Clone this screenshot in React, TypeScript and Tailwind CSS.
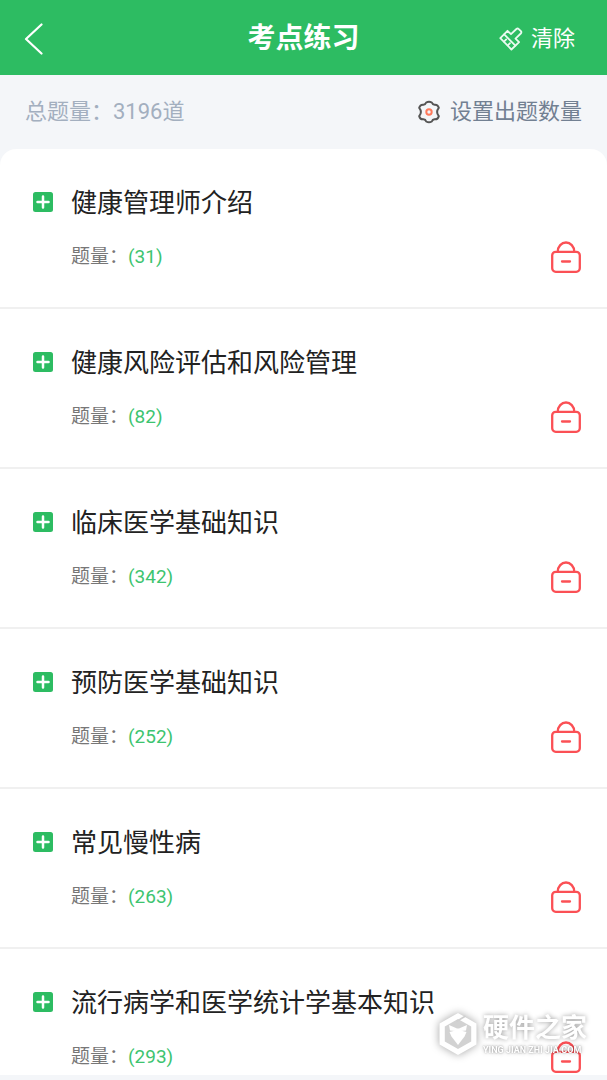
const chapters = [
  { id: 1, title: "健康管理师介绍", count: 31 },
  { id: 2, title: "健康风险评估和风险管理", count: 82 },
  { id: 3, title: "临床医学基础知识", count: 342 },
  { id: 4, title: "预防医学基础知识", count: 252 },
  { id: 5, title: "常见慢性病", count: 263 },
  { id: 6, title: "流行病学和医学统计学基本知识", count: 293 },
];

function BackIcon() {
  return (
    <svg width="20" height="32" viewBox="0 0 20 32" fill="none" stroke="#fff" strokeWidth="2.2" strokeLinecap="round" strokeLinejoin="round">
      <path d="M17.5 1.5 2 16l15.5 14.5" />
    </svg>
  );
}

function BroomIcon() {
  return (
    <svg width="24" height="24" viewBox="0 0 24 24" fill="none" stroke="#eafaf0" strokeWidth="1.8" strokeLinecap="round" strokeLinejoin="round">
      <path d="M8.500 3.800 12 7.200 17.400 2q1.200-1 2.400.1l2.100 2.100q1 1.200-.1 2.300l-5.300 5.100 3.600 3.500L12.400 22.500 1.300 11.200Z" />
      <path d="m5.200 7.400 11.200 11.200" />
      <path d="m5 14.600 2.200-2.200M8.800 18.400l2.200-2.200" />
    </svg>
  );
}

function GearIcon() {
  return (
    <svg width="22" height="24" viewBox="0 0 22 24" fill="none" strokeWidth="2" strokeLinejoin="round">
      <path
        stroke="#555"
        d="M8.200 2.500Q11 .8 13.800 2.500q.7 2 2.700 2.200 3.300-.4 4.300 3.100-1.700 2.100-1.700 4.200 0 2.100 1.700 4.200-1 3.500-4.300 3.100-2 .2-2.700 2.200-2.800 1.700-5.600 0-.7-2-2.700-2.200-3.300.4-4.300-3.100 1.700-2.100 1.700-4.200 0-2.100-1.700-4.200 1-3.500 4.300-3.100 2-.2 2.700-2.200Z"
      />
      <circle cx="11" cy="12" r="2.700" stroke="#ff7a5c" />
    </svg>
  );
}

function PlusIcon() {
  return (
    <svg width="20" height="20" viewBox="0 0 20 20">
      <rect width="20" height="20" rx="2.500" fill="#2dbc62" />
      <path d="M10 4.500v11M4.500 10h11" stroke="#fff" strokeWidth="2.500" strokeLinecap="round" />
    </svg>
  );
}

function LockIcon() {
  return (
    <svg width="30" height="32" viewBox="0 0 30 32" fill="none" stroke="#fb5055" strokeWidth="2.300" strokeLinecap="round">
      <rect x="1.200" y="10.800" width="27.600" height="20" rx="3.500" />
      <path d="M6.800 10.500a8.200 9 0 0 1 16.400 0M11 20.500h8" />
    </svg>
  );
}

function Watermark() {
  return (
    <div className="pointer-events-none absolute right-5 bottom-6 flex items-center gap-1.5 text-white">
      <svg className="overflow-visible drop-shadow-[0_0_4px_rgba(0,0,0,0.35)]" width="38" height="44" viewBox="0 0 38 44">
        <path d="M19 1 37.500 11.500v21L19 43 .5 32.500v-21Z" fill="#d2d2d2" />
        <path fillRule="evenodd" fill="#fff" d="M19 1 37.500 11.500v21L19 43 .5 32.500v-21ZM19 7 5.800 14.500v15L19 37l13.200-7.500v-15Z" />
        <path d="m26.500 4-9 5.500" stroke="#cfcfcf" strokeWidth="1.500" />
        <path d="m10 13 8 3.500h2l8-3.500-1 5.500-5 .5h-6l-5-.5Z" fill="#fff" />
        <path d="m10.500 20 4-1h9l4 1-2 4.500L19 33l-6.500-8.500Z" fill="#fff" />
      </svg>
      <div>
        <div className="text-[26px] leading-8 font-bold [text-shadow:0_0_5px_rgba(0,0,0,0.4)]">硬件之家</div>
        <div className="text-[9px] leading-3 font-bold whitespace-nowrap [text-shadow:0_0_2px_rgba(0,0,0,0.35),0_0_4px_rgba(0,0,0,0.35)]">YING JIAN ZHI JIA.COM</div>
      </div>
    </div>
  );
}

export default function App() {
  return (
    <div className="relative flex h-screen flex-col overflow-hidden bg-[#f4f6f9] font-[Roboto,'Noto_Sans_CJK_SC',sans-serif]">
      <header className="grid h-[75px] shrink-0 grid-cols-[1fr_auto_1fr] items-center bg-[#2dbc62] px-6 pt-0.5 text-white">
        <button type="button" aria-label="返回" className="justify-self-start">
          <BackIcon />
        </button>
        <h1 className="text-[28px] leading-9 font-bold">考点练习</h1>
        <button type="button" className="mr-2 flex items-center gap-2 justify-self-end text-[22px] leading-8">
          <BroomIcon />
          清除
        </button>
      </header>

      <div className="flex h-[74px] shrink-0 items-center justify-between px-[25px] text-[22px] leading-8">
        <span className="text-[#a3afbf]">总题量：3196道</span>
        <button type="button" className="flex items-center gap-2.5 text-[#728092]">
          <GearIcon />
          设置出题数量
        </button>
      </div>

      <main className="mb-[5px] min-h-0 flex-1 overflow-y-auto rounded-t-2xl bg-white [scrollbar-width:none]">
        <ul>
          {chapters.map((chapter) => (
            <li key={chapter.id} className="flex h-40 border-b-2 border-[#f0f0f0] pt-9 pr-[26px] pl-[33px]">
              <button type="button" aria-label={`展开${chapter.title}`} className="flex h-[34px] w-[38px] shrink-0 items-center">
                <PlusIcon />
              </button>
              <div className="flex flex-1 flex-col gap-5">
                <h2 className="text-[26px] leading-9 text-[#222]">{chapter.title}</h2>
                <div className="flex h-8 items-center justify-between text-[19px]">
                  <p className="text-[#777]">
                    题量：<span className="text-[#3dc470]">({chapter.count})</span>
                  </p>
                  <LockIcon />
                </div>
              </div>
            </li>
          ))}
        </ul>
      </main>

      <Watermark />
    </div>
  );
}
